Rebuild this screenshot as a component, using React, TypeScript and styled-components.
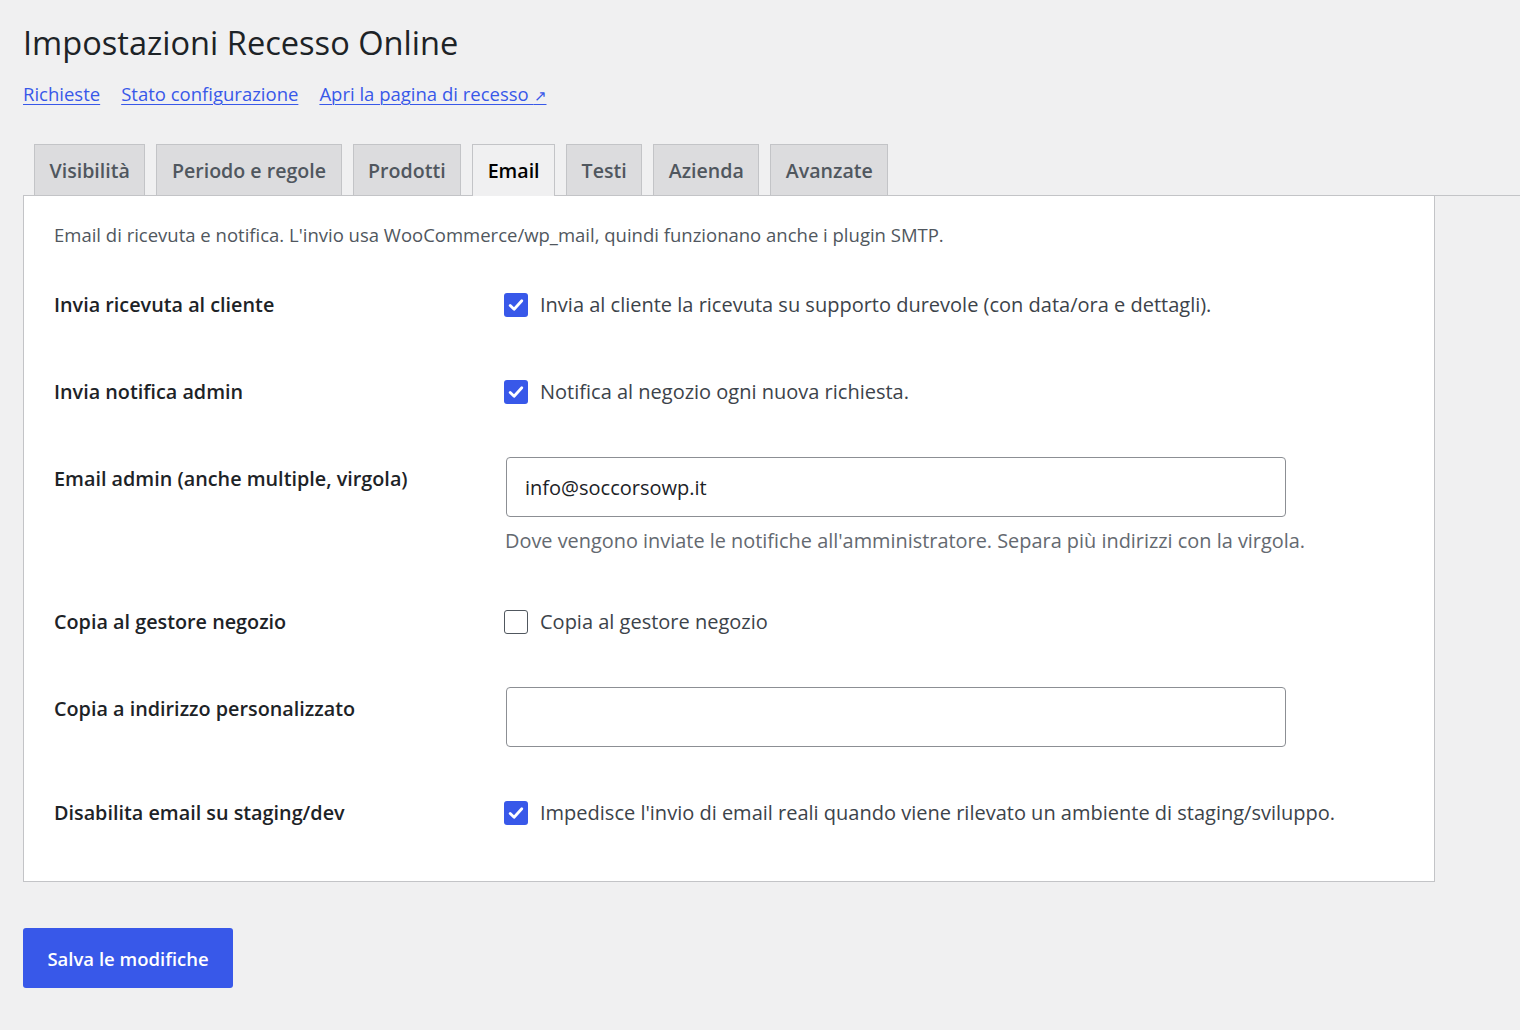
import React from "react";
import styled, { createGlobalStyle } from "styled-components";

const COLORS = {
    BG: "#f0f0f1",
    TEXT: "#1d2327",
    BODY: "#3c434a",
    MUTED: "#646970",
    BLUE: "#3858e9",
    BORDER: "#c3c4c7",
    TAB_BG: "#dcdcde",
    TAB_TEXT: "#50575e",
    INPUT_BORDER: "#8c8f94",
};

const FONT = `"Segoe UI", "Open Sans", "Noto Sans", sans-serif`;

const GlobalStyle = createGlobalStyle`
    html, body {
        margin: 0;
        padding: 0;
        background: ${COLORS.BG};
    }
    body {
        font-family: ${FONT};
        color: ${COLORS.BODY};
    }
`;

const tabs = ["Visibilità", "Periodo e regole", "Prodotti", "Email", "Testi", "Azienda", "Avanzate"];

interface Row {
    label: string,
    kind: "check" | "input",
    checked?: boolean,
    text?: string,
    value?: string,
    description?: string
}

const rows: Row[] = [
    { label: "Invia ricevuta al cliente", kind: "check", checked: true, text: "Invia al cliente la ricevuta su supporto durevole (con data/ora e dettagli)." },
    { label: "Invia notifica admin", kind: "check", checked: true, text: "Notifica al negozio ogni nuova richiesta." },
    { label: "Email admin (anche multiple, virgola)", kind: "input", value: "info@soccorsowp.it", description: "Dove vengono inviate le notifiche all'amministratore. Separa più indirizzi con la virgola." },
    { label: "Copia al gestore negozio", kind: "check", checked: false, text: "Copia al gestore negozio" },
    { label: "Copia a indirizzo personalizzato", kind: "input", value: "" },
    { label: "Disabilita email su staging/dev", kind: "check", checked: true, text: "Impedisce l'invio di email reali quando viene rilevato un ambiente di staging/sviluppo." },
];

const Checkbox: React.FC<{ checked: boolean }> = ({ checked }) => (
    <CheckBox $checked={checked}>
        {checked ? (
            <svg width="18" height="18" viewBox="0 0 18 18">
                <path d="M3.2 9.4 L7.1 13.2 L14.8 4.8" fill="none" stroke="#fff" strokeWidth="2.8" strokeLinecap="round" strokeLinejoin="round" />
            </svg>
        ) : null}
    </CheckBox>
);

const App: React.FC = () => {
    return (
        <>
            <GlobalStyle />
            <Page>
                <Title>Impostazioni Recesso Online</Title>
                <Links>
                    <Link href="#">Richieste</Link>
                    <Link href="#">Stato configurazione</Link>
                    <Link href="#">Apri la pagina di recesso <Arrow>↗</Arrow></Link>
                </Links>
                <TabBar>
                    {tabs.map(t => (
                        <Tab key={t} $active={t === "Email"}>{t}</Tab>
                    ))}
                </TabBar>
                <Panel>
                    <Intro>Email di ricevuta e notifica. L'invio usa WooCommerce/wp_mail, quindi funzionano anche i plugin SMTP.</Intro>
                    {rows.map(r => (
                        <SettingRow key={r.label}>
                            <LabelCell>{r.label}</LabelCell>
                            <FieldCell>
                                {r.kind === "check" ? (
                                    <CheckLine>
                                        <Checkbox checked={!!r.checked} />
                                        <span>{r.text}</span>
                                    </CheckLine>
                                ) : (
                                    <>
                                        <TextInput type="text" defaultValue={r.value} />
                                        {r.description ? <Description>{r.description}</Description> : null}
                                    </>
                                )}
                            </FieldCell>
                        </SettingRow>
                    ))}
                </Panel>
                <SaveButton>Salva le modifiche</SaveButton>
            </Page>
        </>
    );
};

const Page = styled.div`
    padding: 19px 0 40px 23px;
`

const Title = styled.h1`
    margin: 0;
    font-size: 32.6px;
    font-weight: 400;
    line-height: 48px;
    color: ${COLORS.TEXT};
`

const Links = styled.div`
    display: flex;
    gap: 21px;
    margin-top: 13px;
    font-size: 18.5px;
    line-height: 28px;
`

const Link = styled.a`
    color: ${COLORS.BLUE};
    text-decoration: underline;
    text-underline-offset: 3px;
    text-decoration-thickness: 1px;
`

const Arrow = styled.span`
    font-size: 15px;
`

const TabBar = styled.div`
    display: flex;
    gap: 11px;
    margin-top: 35px;
    padding-left: 11px;
    border-bottom: 1px solid ${COLORS.BORDER};
`

const Tab = styled.div<{ $active: boolean }>`
    box-sizing: border-box;
    padding: 0 14.5px;
    display: flex;
    align-items: center;
    font-size: 19.6px;
    font-weight: 600;
    border: 1px solid ${COLORS.BORDER};
    border-bottom: none;
    background: ${p => p.$active ? COLORS.BG : COLORS.TAB_BG};
    color: ${p => p.$active ? "#000" : COLORS.TAB_TEXT};
    height: ${p => p.$active ? "52px" : "51px"};
    margin-bottom: ${p => p.$active ? "-1px" : "0"};
    align-self: flex-end;
`

const Panel = styled.div`
    width: 1412px;
    box-sizing: border-box;
    background: #fff;
    border: 1px solid ${COLORS.BORDER};
    border-top: none;
    padding: 25px 30px 25px;
`

const Intro = styled.p`
    margin: 0 0 12px;
    font-size: 18.5px;
    line-height: 28px;
    color: ${COLORS.TAB_TEXT};
`

const SettingRow = styled.div`
    display: grid;
    grid-template-columns: 450px 1fr;
`

const LabelCell = styled.div`
    padding: 30px 0 29px;
    font-size: 19.8px;
    line-height: 28px;
    font-weight: 600;
    color: ${COLORS.TEXT};
`

const FieldCell = styled.div`
    padding: 22px 0;
`

const CheckLine = styled.label`
    display: flex;
    align-items: center;
    gap: 12px;
    height: 43px;
    font-size: 20px;
    color: ${COLORS.BODY};
`

const CheckBox = styled.span<{ $checked: boolean }>`
    width: 24px;
    height: 24px;
    box-sizing: border-box;
    flex-shrink: 0;
    border-radius: 3px;
    display: flex;
    align-items: center;
    justify-content: center;
    background: ${p => p.$checked ? COLORS.BLUE : "#fff"};
    border: ${p => p.$checked ? "none" : `1.5px solid ${COLORS.TAB_TEXT}`};
`

const TextInput = styled.input`
    display: block;
    width: 780px;
    height: 60px;
    box-sizing: border-box;
    margin-left: 2px;
    padding: 0 18px;
    border: 1px solid ${COLORS.INPUT_BORDER};
    border-radius: 4px;
    font-family: ${FONT};
    font-size: 20px;
    color: ${COLORS.TEXT};
    background: #fff;
    outline: none;
`

const Description = styled.p`
    margin: 8px 0 0 1px;
    font-size: 19.9px;
    line-height: 31px;
    color: ${COLORS.MUTED};
`

const SaveButton = styled.button`
    display: block;
    margin-top: 46px;
    width: 210px;
    height: 60px;
    border: none;
    border-radius: 3px;
    background: ${COLORS.BLUE};
    color: #fff;
    font-family: ${FONT};
    font-size: 18.5px;
    font-weight: 600;
    cursor: pointer;
`

export default App;
